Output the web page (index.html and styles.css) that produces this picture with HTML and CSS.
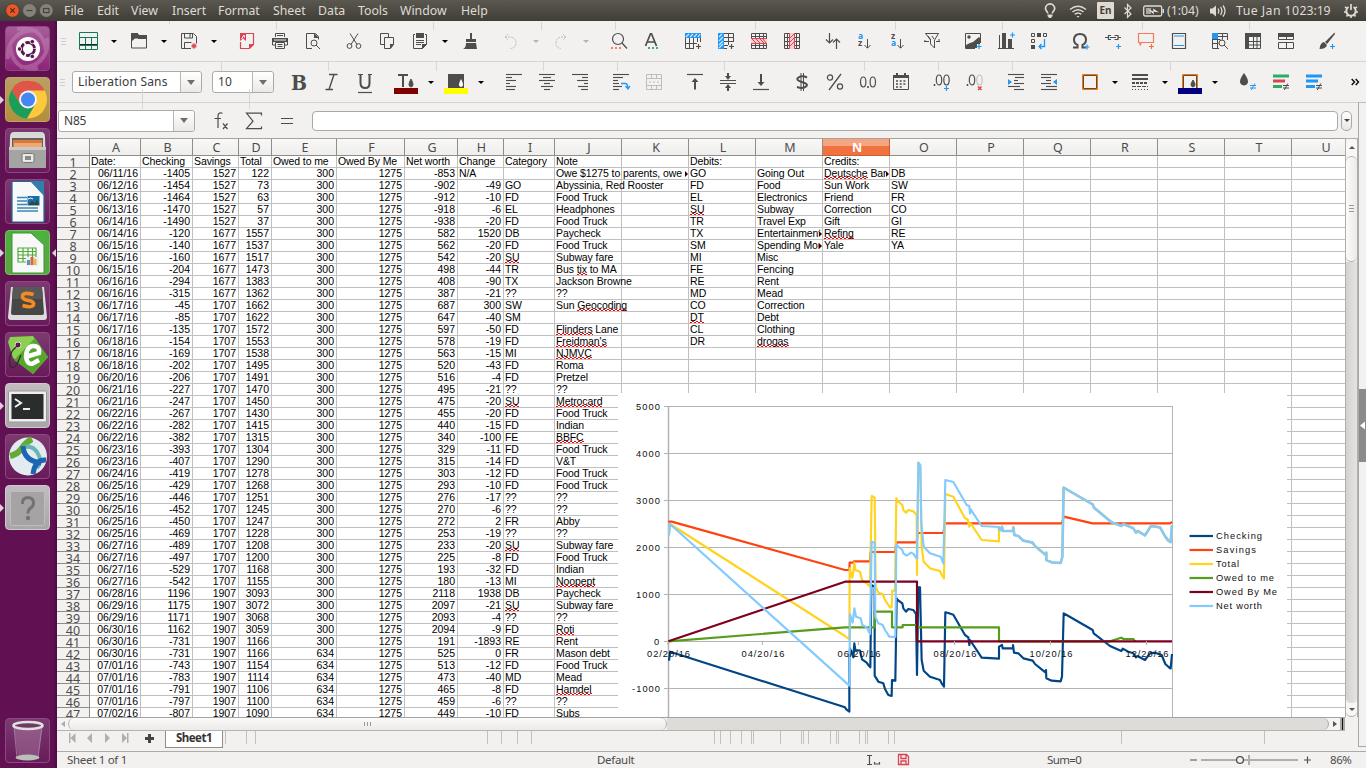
FILE: index.html
```html
<!DOCTYPE html>
<html lang="en">
<head>
<meta charset="utf-8">
<title>Spreadsheet</title>
<link rel="stylesheet" href="styles.css">
</head>
<body>
<header class="panel">
  <div class="winbtns">
    <svg width="58" height="21" viewBox="0 0 58 21"><circle cx="12.5" cy="10.5" r="6.7" fill="#e9582a" stroke="#3a352f" stroke-width=".6"/><path d="M10.3 8.3l4.4 4.4M14.7 8.3l-4.4 4.4" stroke="#5a2312" stroke-width="1.2"/><circle cx="29.5" cy="10.5" r="6.5" fill="#85827a"/><path d="M26.500 10.500h6" stroke="#45423c" stroke-width="1.2"/><circle cx="46.300" cy="10.500" r="6.500" fill="#85827a"/><rect x="43.500" y="8.500" width="5.500" height="4" fill="none" stroke="#45423c" stroke-width="1.100"/></svg>
  </div>
  <nav class="menu"><span>File</span><span>Edit</span><span>View</span><span>Insert</span><span>Format</span><span>Sheet</span><span>Data</span><span>Tools</span><span>Window</span><span>Help</span></nav>
  <div class="tray">
    <svg width="16" height="18" viewBox="0 0 16 18"><path d="M5.800 11.500c0-2-2.300-2.600-2.300-5a4.600 4.600 0 0 1 9.200 0c0 2.400-2.400 3-2.400 5" fill="none" stroke="#dfdbd2" stroke-width="1.700"/><path d="M5.500 12.500h5v1.500l-1.500 2h-2l-1.500-2z" fill="#dfdbd2"/></svg>
    <svg class="wifi" width="20" height="16" viewBox="0 0 20 16" fill="none" stroke="#dfdbd2" stroke-width="1.500"><path d="M2 6.500q8-6.500 16 0M4.500 9q5.500-4.600 11 0M6.800 11.400q3.200-2.800 6.400 0"/><path d="M8.500 13l1.500 1.700 1.500-1.700z" fill="#dfdbd2" stroke="none"/></svg>
    <b class="lang">En</b>
    <svg class="bt" width="10" height="16" viewBox="0 0 10 16" fill="none" stroke="#dfdbd2" stroke-width="1.200"><path d="M1.500 4.500l6.500 6.500-3.500 3.300V1.500L8 5 1.500 11"/></svg>
    <svg class="bat" width="22" height="12" viewBox="0 0 22 12"><rect x=".7" y="1" width="18" height="10" rx="1.500" fill="none" stroke="#dfdbd2" stroke-width="1.300"/><path d="M19.500 4h1.500v4h-1.500" fill="#dfdbd2"/><path d="M3 3h5v6H3z" fill="#aaa69e"/><path d="M5.500 4.500l5 2-.5-3 6 4-5.500-1 .5 3z" fill="#f3efe6"/></svg>
    <span class="left-time">(1:04)</span>
    <svg class="snd" width="18" height="14" viewBox="0 0 18 14"><path d="M1 4.500h2.500L7 1.500v11L3.500 9.500H1z" fill="#dfdbd2"/><path d="M9 4.500q1.700 2.500 0 5M11.500 3q2.800 4 0 8M14 1.500q4 5.500 0 11" fill="none" stroke="#dfdbd2" stroke-width="1.300"/></svg>
    <span class="clock"><span>Tue Jan 10</span><span class="hm">23:19</span></span>
    <svg class="gear" width="16" height="16" viewBox="0 0 16 16" fill="none" stroke="#dfdbd2"><path d="M5.500 4A4.700 4.700 0 1 0 10.500 4" stroke-width="2"/><path d="M8 1v6" stroke-width="1.700"/><path d="M2 4l1.700 1M12.300 5L14 4M1 9h2.500M12.500 9H15M3.500 13.500l1.300-1.700M11.200 11.800l1.300 1.700M8 12.500V15" stroke-width="1.700"/></svg>
  </div>
</header>

<div class="desk">
<aside class="launcher">
  <div class="tile purple"><svg viewBox="0 0 45 45"><path d="M3 33C1 15 15 2 32 5M42 12C45 30 32 43 15 41M12 3Q38-1 41 25M33 42Q8 46 5 20" fill="none" stroke="#c98dbd" stroke-opacity=".45" stroke-width="4"/><circle cx="23" cy="23" r="12" fill="#fff"/><circle cx="23" cy="23" r="6.500" fill="none" stroke="#5c1650" stroke-width="2.800" stroke-dasharray="12 1.600"/><g fill="#5c1650" stroke="#fff" stroke-width=".8"><circle cx="14.500" cy="23" r="2.200"/><circle cx="27.300" cy="15.600" r="2.200"/><circle cx="27.300" cy="30.400" r="2.200"/></g></svg></div>
  <div class="tile gold run"><svg viewBox="0 0 45 45"><circle cx="23" cy="22.500" r="19" fill="#fdc93c"/><path d="M23 13.500H39.700Q36 5 27 3.900 12 2 6.400 13.200L15 26.500z" fill="#df5548"/><path d="M6.500 13A19 19 0 0 0 22 41.500L30.500 27 15 26.500z" fill="#1c9e5a"/><circle cx="23" cy="22.500" r="9" fill="#f3f3f3"/><circle cx="23" cy="22.500" r="7" fill="#4486f2"/></svg></div>
  <div class="tile"><svg viewBox="0 0 45 45"><path d="M5 9q0-5 4-5h27q4 0 4 5l1 31H4z" fill="#d9d9d8"/><path d="M7 10h31v10H7z" fill="#63605e"/><path d="M8 12h29v8H8z" fill="#d9783e"/><path d="M9 15h28v4H9z" fill="#f0a873"/><path d="M4 19h37v21H4z" fill="#a4a4a3"/><path d="M4 19h37v3H4z" fill="#c9c9c8"/><rect x="17" y="25.500" width="12" height="9" rx="1.500" fill="#e9e9e8" stroke="#777"/><rect x="20" y="28" width="6" height="4" fill="#898988"/></svg></div>
  <div class="tile"><svg viewBox="0 0 45 45"><path d="M7 2.500h20L39 15v28H7z" fill="#f7f8f8" stroke="#226996" stroke-width="1.200"/><path d="M25 2h14v15z" fill="#2f7fae"/><path d="M12 18.500h10M12 22h10M12 25.500h10M12 29h21M12 32h21" stroke="#3a86b8" stroke-width="1.700"/><rect x="22.500" y="17" width="12" height="9.500" fill="#1b6cb0"/><path d="M23 26l4-4 3 2 2-4 2 6z" fill="#2c4f2a"/><path d="M23 20q3-2 5 0" fill="none" stroke="#fff"/></svg></div>
  <div class="tile green run active"><svg viewBox="0 0 45 45"><path d="M7 3h19L39 15v28H7z" fill="#f8f8f8" stroke="#3a972c"/><path d="M27 2h13v14z" fill="#4cb43d"/><path d="M13 18h18v14H13zM13 21.500h18M13 25h18M13 28.500h18M18 18v14M23 18v14M27.500 18v14" fill="none" stroke="#54ac3b" stroke-width="1.200"/><path d="M21 27h13v9H21z" fill="#eee"/><path d="M22 30h3v5h-3z" fill="#5992c2"/><path d="M25.500 27h3v8h-3z" fill="#dc6538"/><path d="M29 29h2.500v6H29z" fill="#e0bd44"/></svg></div>
  <div class="tile"><svg viewBox="0 0 45 45"><path d="M6 6h33l3 30q0 3-3 3H6q-3 0-3-3z" fill="#dcdcdc"/><path d="M8 6h29l2 26q0 2-2 2H8q-2 0-2-2z" fill="#464646"/><path d="M8 6h29l1 12H7z" fill="#575757"/><path d="M28.500 13.500q-11-3-11 2 0 3 6 4t5 4.500q-2 3-11 .5" fill="none" stroke="#f68a20" stroke-width="3.600"/></svg></div>
  <div class="tile"><svg viewBox="0 0 45 45"><path d="M5 5l23-1 15 21-15 17L8 26 3 10z" fill="#8bd04f"/><path d="M30 6l13 19-15 17L9 28z" fill="#55a82c"/><circle cx="13" cy="13" r="3" fill="#5b1f4c" stroke="#ddd"/><path d="M12 14Q2 22 5 34q3 4 7-2l4-9" fill="none" stroke="#35262f" stroke-width="1.300"/><path d="M22 24.500l12-3.500q1-8-7-7-6 2-6 11 1 8 7 6.500l6-3.500" fill="none" stroke="#fff" stroke-width="4.500"/></svg></div>
  <div class="tile grey run"><svg viewBox="0 0 45 45"><rect x="3.500" y="8" width="38" height="31" rx="1" fill="#eee" stroke="#999"/><rect x="6.500" y="11" width="32" height="25" fill="#2b2d2c"/><path d="M10 16l6 4-6 4M18 26h7" fill="none" stroke="#eee" stroke-width="2"/></svg></div>
  <div class="tile"><svg viewBox="0 0 45 45"><circle cx="23" cy="22.500" r="19" fill="#e3ebf0"/><path d="M5 22q8-2 12-8 4-6 10-9" fill="none" stroke="#64aa35" stroke-width="6"/><path d="M17 14q9-4 15 4 6 9 0 16" fill="none" stroke="#68b6b0" stroke-width="4"/><path d="M18 12q1 15 18 17M41 26q-11-1-13 14" fill="none" stroke="#1c65b2" stroke-width="5"/></svg></div>
  <div class="tile grey run"><svg viewBox="0 0 45 45"><rect x="5.500" y="6.500" width="34" height="34" rx="2" fill="#a5a3a4" stroke="#bfbdbe"/><path d="M17.500 19q-.5-6 5-6.500 6 0 6 5.500 0 3.500-3.500 5.500-2 1.500-2 5" fill="none" stroke="#747273" stroke-width="3"/><circle cx="23" cy="33" r="2.200" fill="#747273"/></svg></div>
  <div class="tile trash"><svg viewBox="0 0 45 45"><path d="M9 9h28l-4 31H13z" fill="#c9a7c2" fill-opacity=".32"/><path d="M9 9l3 31M37 9l-4 31" stroke="#ddd" stroke-opacity=".4"/><ellipse cx="23" cy="7.500" rx="14.500" ry="3.500" fill="#6d3b63" stroke="#dfe1df" stroke-width="2.600"/><ellipse cx="22.500" cy="39.500" rx="12" ry="3" fill="#b9bfb9"/></svg></div>
</aside>

<main class="app">
  <div class="toolbar" id="standard"></div>
  <div class="toolbar" id="formatting"></div>
  <div class="formula">
    <div class="combo name"><span>N85</span><i></i></div>
    <svg class="fx" width="90" height="30" viewBox="0 0 90 30" fill="none" stroke="#4d4d4d" stroke-width="1.200"><path d="M16.500 7.200q-4.500-1.500-4.500 3V22M8.500 12.500h6.500M17 17.500l4.500 5.500M21.500 17.500l-4.500 5.500M55.500 9.500v-2.300H40.500l6.500 8-6.500 7.500H55.500v-2.300M75 12.500h12M75 17.500h12"/></svg>
    <div class="entry"></div><div class="drop"></div>
  </div>
  <div class="work">
    <div class="sheetcol">
      <div class="view">
        <div class="sheet" id="sheet"></div>
        <div class="chart" id="chart"></div>
      </div>
      <div class="hscroll"><i class="ha"><svg width="4" height="6"><path d="M4 0v6L0 3z" fill="#aaa"/></svg></i><i class="thumb"><svg width="8" height="4"><path d="M.5 0v4M3.500 0v4M6.500 0v4" stroke="#999"/></svg></i><i class="trough"></i><i class="ha r"><svg width="4" height="6"><path d="M0 0v6l4-3z" fill="#555"/></svg></i><i class="split"></i></div>
    </div>
    <div class="vscroll"><i class="va"></i><i class="thumb"><svg width="5" height="8"><path d="M0 .5h5M0 3.500h5M0 6.500h5" stroke="#999"/></svg></i><i class="trough"></i><i class="va"></i></div>
    <div class="side"><svg width="9" height="644" viewBox="0 0 9 644"><path d="M1 251h8v73H1z" fill="#8c8b89"/><path d="M7 283.500v8l-5-4z" fill="#fff"/></svg></div>
  </div>
  <div class="tabs">
    <svg width="108" height="20" viewBox="0 0 108 20" fill="#b1afac"><path d="M12 2h1.500v10H12zM18.500 2v10l-5-5zM35 2v10l-5-5zM48 2v10l5-5zM65 2v10l5-5zM70 2h1.500v10H70z"/><path d="M91 3h3v3h3v3h-3v3h-3v-3h-3V6h3z" fill="#454545"/></svg>
    <b class="tab">Sheet1</b>
    <svg class="marks" width="1122" height="15" viewBox="223 732 1122 15"><path d="M225.500 732v13M246.500 732v13M255.500 732v13M487.500 732v13M501.500 732v13M517.500 732v13M531.500 732v13M714.500 732v13M720.500 732v13M730.500 732v13M741.500 732v13M751.500 732v13M753.500 732v13M780.500 732v13M801.500 732v13M803.500 732v13M808.500 732v13M830.500 732v13M836.500 732v13M838.500 732v13M859.500 732v13M865.500 732v13M867.500 732v13M888.500 732v13M894.500 732v13M1121.500 732v13M1264.500 732v13" stroke="#c3c1be"/></svg>
  </div>
  <footer class="status">
    <span class="s1">Sheet 1 of 1</span><span class="s2">Default</span>
    <svg class="s3" width="44" height="14" viewBox="0 0 44 14" fill="none"><path d="M1 2.500h5M3.500 2.500v9M1 11.500h5M8.500 9v2h5V9" stroke="#4d4d4d" stroke-width="1.200"/><path d="M32.500 1.500h8l2 2v8H32.500zM35 2v3.500h5V2M35 11V8h5v3" stroke="#da4453" stroke-width="1.300"/></svg>
    <span class="s4">Sum=0</span>
    <svg class="s5" width="124" height="14" viewBox="0 0 124 14"><path d="M1 7h7M115 7h7M118.500 3.500v7" stroke="#4d4d4d" stroke-width="1.200"/><path d="M12 7h97" stroke="#b0aeab" stroke-width="2"/><path d="M60 2v10" stroke="#b0aeab" stroke-width="2"/><circle cx="51" cy="7" r="3.400" fill="#f2f1f0" stroke="#4d4d4d" stroke-width="1.300"/></svg>
    <span class="s6">86%</span>
  </footer>
  <svg class="ticks" width="1309" height="90" viewBox="57 21 1309 90"><path d="M169.500 21v3M276.500 22v8M433.500 22v8M541.500 22v8M615.500 22v8M755.500 22v8M895.500 22v8M1002.500 22v8M1142.500 22v8M1249.500 22v8M221.500 62v9M328.500 62v9M436.500 62v9M543.500 62v9M617.500 62v9M724.500 62v9M864.500 62v9M938.500 62v9M1012.500 62v9M1170.500 62v9M142.500 89v20M249.500 89v20" stroke="#d8d6d4"/></svg>
</main>
</div>
<script src="script.js"></script>
</body>
</html>
```
FILE: styles.css
```css
*{box-sizing:border-box}
body{margin:0;width:1366px;height:768px;overflow:hidden;background:#f2f1f0;font-family:"Noto Sans","Open Sans",sans-serif;color:#4c4c4c;display:flex;flex-direction:column}
i{font-style:normal}
svg{display:block;flex:none}
.panel{height:21px;background:linear-gradient(#5b5850,#403d38);display:flex;align-items:center;color:#dfdbd2;font-size:12.3px;line-height:20px;white-space:nowrap}
.menu{display:flex;padding-left:6px;width:975px}
.menu span{width:33px}
.menu span:nth-child(2){width:34px}
.menu span:nth-child(3){width:41px}
.menu span:nth-child(4){width:46px}
.menu span:nth-child(5){width:55px}
.menu span:nth-child(6){width:45px}
.menu span:nth-child(7){width:40px}
.menu span:nth-child(8){width:42px}
.menu span:nth-child(9){width:61px}
.tray{display:flex;align-items:center;padding-left:9px}
.wifi{margin-left:10px}
.lang{background:#dfdbd2;color:#45413b;width:17px;height:17px;border-radius:1px;margin-left:9px;font-size:10px;line-height:17px;text-align:center}
.bt{margin-left:9px}
.bat{margin-left:10px}
.left-time{width:44px;padding-left:2px}
.snd{margin-left:0}
.clock{display:flex;width:99px;margin-left:9px;letter-spacing:.45px}
.hm{letter-spacing:-.1px}
.gear{margin-left:8px}
.desk{display:flex;height:747px}
.launcher{width:57px;background:linear-gradient(90deg,#611152 0 53px,#4d0a41);padding:5px 0 5px 5px;display:flex;flex-direction:column;gap:6px;flex:none}
.tile{width:45px;height:45px;border-radius:4px;border:1px solid #8b4a7f;background:linear-gradient(#7c3a70,#681b5a);position:relative}
.tile svg{width:45px;height:45px;margin:-1px}
.purple{background:linear-gradient(#a85d9a,#8d2377)}
.gold{background:linear-gradient(#b8a066,#b38f3a);border-color:#c0a566}
.green{background:linear-gradient(#4fae42,#58a83e);border-color:#75c264}
.grey{background:linear-gradient(#c2bcc0,#aaa5a8);border-color:#cfcacd}
.trash{margin-top:auto}
.run::before{content:"";position:absolute;left:-6px;top:18px;border:4px solid transparent;border-left-color:#dcd3da;border-right:0}
.active::after{content:"";position:absolute;left:46px;top:18px;border:4px solid transparent;border-right-color:#dcd3da;border-left:0}
.app{flex:1;display:flex;flex-direction:column;position:relative;min-width:0}
.toolbar{height:41px;border-bottom:1px solid #d6d4d2;display:flex;align-items:center;padding-left:14px;background:#f2f1f0}
#standard{padding-left:15px}
.toolbar svg{overflow:visible}
.btn{width:33px;height:24px;display:flex;align-items:center;justify-content:center;flex:none}
.arr{width:17px;height:24px;flex:none;display:flex;align-items:center;justify-content:center}
.arr::before{content:"";border:3px solid transparent;border-top:3px solid #000;border-bottom:0}
.arr.off::before{border-top-color:#b5b3b1}
.gap{width:8px;flex:none}
.grip{width:5px;height:9px;margin:2px 0 0 -11px;background:repeating-linear-gradient(#d0cecb 0 1px,transparent 1px 3px);flex:none}
.lead{width:6px;flex:none}
.combo{height:22px;border:1px solid #adaba8;border-radius:3px;background:#fff;display:flex;font-size:12px;line-height:19px;color:#3c3c3c;flex:none;letter-spacing:.2px}
.combo span{flex:1;padding-left:5px;white-space:nowrap}
.combo i{width:21px;border-left:1px solid #b8b6b3;background:linear-gradient(#fff,#ebe9e7);border-radius:0 3px 3px 0;display:flex;align-items:center;justify-content:center}
.combo i::before{content:"";border:4px solid transparent;border-top:5px solid #706e6b;border-bottom:0}
.family{width:130px;margin-left:7px}
.size{width:62px;margin:0 8px 0 10px}
.more{margin-left:21px;line-height:20px}
.formula{height:35px;display:flex;align-items:center;background:#f2f1f0}
.name{width:137px;margin-left:1px;letter-spacing:-.2px}
.fx{margin:0 16px 0 11px}
.entry{width:1026px;height:20px;border:1px solid #aaa8a5;border-radius:4px;background:#fff}
.drop{width:11px;height:20px;border:1px solid #aaa8a5;border-radius:5px;margin-left:3px;background:linear-gradient(#fff,#e8e6e4);display:flex;align-items:center;justify-content:center}
.drop::before{content:"";border:3px solid transparent;border-top:3px solid #444;border-bottom:0}
.work{display:flex;height:593px;flex:none}
.sheetcol{width:1288px;display:flex;flex-direction:column}
.view{height:579px;overflow:hidden;position:relative;background:#fff;border-top:1px solid #a5a3a0}
.sheet{display:grid;grid-template-columns:33px 51px 52px 46px 33px 65px 68px 53px 46px 51px repeat(11,67px) 67px;grid-auto-rows:12px;width:1355px}
.ch{height:17px;border-right:1px solid #8f8d8a;border-bottom:1px solid #8f8d8a;background:linear-gradient(#f8f8f7,#efeeed);font-size:12.500px;line-height:17px;text-align:center;color:#4c4c4c;padding-left:2px}
.ch.sel{background:linear-gradient(#f6a583 0 45%,#f0733f 46%);color:#fff;font-weight:bold;border-color:#c8602f}
.rh{border-right:1px solid #8f8d8a;border-bottom:1px solid #8f8d8a;background:#f3f2f1;font-size:12.500px;line-height:14px;text-align:center;overflow:hidden;color:#4c4c4c}
.c{border-right:1px solid #c0c0c0;border-bottom:1px solid #c0c0c0;font:10.500px/10px "Liberation Sans",Arial,sans-serif;color:#000;white-space:nowrap;padding-left:1px;letter-spacing:-.1px;min-width:0}
.n{text-align:right;padding-right:2px;letter-spacing:0}
.c u{text-decoration:none;background:repeating-linear-gradient(90deg,#f00 0 2px,transparent 2px 4px) 0 100%/100% 1px no-repeat,repeating-linear-gradient(90deg,transparent 0 2px,#f00 2px 4px) 0 calc(100% - 1px)/100% 1px no-repeat}
.cut{display:block;overflow:hidden;position:relative;height:12px;width:65px}
.cut.wide{width:132px}
.cut::after{content:"";position:absolute;right:0;top:3px;border:3px solid transparent;border-left:3px solid #300;border-right:0;background:#fff}
.chart{position:absolute;left:561px;top:254px;width:669px;height:325px;background:#fff}
.chart text{font-family:"Liberation Sans",Arial,sans-serif;font-size:9.300px;fill:#111}
.hscroll{height:14px;border-top:1px solid #a5a3a0;border-bottom:1px solid #b5b3b0;background:#f4f3f2;display:flex}
.hscroll i{display:flex;align-items:center;justify-content:center}
.ha{width:11px}
.hscroll .thumb{width:599px;border:1px solid #b5b3b0;border-width:0 1px;border-radius:7px;background:linear-gradient(#fbfbfa,#eceae8)}
.hscroll .trough{flex:1;background:#dddcd9;border-radius:0 7px 7px 0;border-right:1px solid #aaa}
.split{width:5px;background:linear-gradient(90deg,#aaa 2px,#111 2px 3px,#aaa 3px)}
.vscroll{width:13px;height:579px;border:1px solid #b0aeab;border-width:1px 1px 0;background:#f2f1f0;display:flex;flex-direction:column}
.va{height:14px;border:1px solid #b0aeab;border-width:0 0 1px;border-radius:0 0 6px 6px;display:flex;align-items:center;justify-content:center;background:#f8f7f6}
.va::before{content:"";border:3px solid transparent;border-top:3px solid #555;border-bottom:0}
.va:first-child{border-radius:6px 6px 0 0;height:17px;border-bottom:0}
.va:first-child::before{transform:rotate(180deg)}
.vscroll .thumb{height:106px;border:1px solid #b5b3b0;border-width:1px 0;border-radius:6px;background:linear-gradient(90deg,#fbfbfa,#eceae8);display:flex;align-items:center;justify-content:center}
.vscroll .trough{flex:1;background:linear-gradient(90deg,#d4d2d0,#e5e4e2);border-radius:0 0 6px 6px}
.side{width:8px;margin-top:-36px;height:645px;border-left:1px solid #aaa8a5;border-top:1px solid #c0bebb;border-bottom:1px solid #aaa8a5;background:#f2f1f0;overflow:hidden}
.side svg{margin:35px 0 0 -1px;margin-top:0}
.side svg{transform:translateY(35px)}
.tabs{height:21px;display:flex;border-bottom:1px solid #adaba8;flex:none}
.tab{width:58px;height:17px;background:#fff;border:1px solid #8f8d8a;border-top:0;text-align:center;font-size:11.500px;line-height:14px;color:#333;letter-spacing:-.5px}
.status{height:15px;display:flex;align-items:center;font-size:11.500px;line-height:14px;white-space:nowrap;background:#f2f1f0}
.s1{width:540px;padding-left:10px;letter-spacing:-.3px}
.s2{width:269px;letter-spacing:-.3px}
.s4{width:142px;margin-left:137px;letter-spacing:-.6px}
.s6{margin-left:17px;letter-spacing:-.4px}
.ticks{position:absolute;left:0;top:0;pointer-events:none}
```
FILE: script.js
```js
const G = '#4d4d4d', B = '#2196f3', R = '#da4453', O = '#f67400';
const svg = (body, extra = '') =>
  `<svg width="16" height="16" viewBox="0 0 16 16" fill="none" stroke="${G}" ${extra}>${body}</svg>`;
const plus = (x, y, c = B) => `<path d="M${x - 2.5} ${y}h5M${x} ${y - 2.5}v5" stroke="${c}" stroke-width="1.2"/>`;
const neq = c => `<path d="M10 11.500h6M10 14h6M14.800 9.500l-3.500 6.500" stroke="${c}"/>`;
const lines = list => list.map(([x, y, w]) => `<path d="M${x} ${y + .5}h${w}" stroke-width="1.100"/>`).join('');
const zero = (x, c = G) => `<ellipse cx="${x}" cy="8" rx="2.700" ry="5" stroke="${c}" stroke-width="1.200"/>`;
const letters = (a, ca, b, cb) =>
  `<text x="0" y="6" font-size="8.500" font-weight="700" fill="${ca}" stroke="none">${a}</text><text x="0" y="12.500" font-size="8.500" font-weight="700" fill="${cb}" stroke="none">${b}</text><path d="M9.500 6v9M6.500 12l3 3.200 3-3.200"/>`;

const icons = {
  table: svg('<path d="M-1.500-.5h18v17h-18zM-1.500 4.500h18M4.500 4.500v12M10.500 4.500v12M-1.500 12.500h18" stroke="#117a5b"/><path d="M-1 11.500h17" stroke="#222"/>'),
  open: svg(`<path d="M.5 15V.5h6l1.500 2h7.500V15z"/><path d="M0 0h7v5.500H4L1 8H0z" fill="${G}" stroke="none"/><path d="M7 2h9v4H7z" fill="${G}" stroke="none"/>`),
  save: svg(`<path d="M10 15.500H.5V.5h12l3 3v7M3.500.5v4.500h8V.5M9 .5v4M3.500 15V9.500h7"/><circle cx="13" cy="13" r="2.400" fill="${R}" stroke="#f2a0a8"/>`),
  pdf: svg(`<path d="M6 .5h8.500v11l-4 4H1.500V9" stroke="${R}" stroke-width="1.200"/><path d="M1 0h6v8L4 5.500 1 8zM10 11h5l-5 5z" fill="${R}" stroke="none"/><path d="M2.500 6L5 2l.5 2.500" stroke="#fff"/>`),
  print: svg(`<path d="M3.500 4V.5h9V4M5 2.500h6M3.500 12H.5V6.500h15V12h-3M3.500 9.500h9v6h-9zM5.500 11.500h5M5.500 13.500h5"/><path d="M0 5h16v4H0z" fill="${G}" stroke="none"/><path d="M2 7h12" stroke="#f2f1f0"/>`),
  preview: svg(`<path d="M7 15.500H1.500V.5h9l3 3v3"/><path d="M9 0l5 5H9z" fill="${G}" stroke="none"/><circle cx="9" cy="10" r="3"/><path d="M11 12l4 4"/>`),
  cut: svg('<path d="M4 .5l7 11M12 .5L5 11.500"/><circle cx="3.500" cy="13" r="2.400"/><circle cx="12.500" cy="13" r="2.400"/>'),
  copy: svg(`<path d="M5 11.500H1.500V.500h8V4"/><path d="M5.500 4.500h9v7l-3 4h-6z"/><path d="M11 11h4l-4 5z" fill="${G}" stroke="none"/>`),
  paste: svg(`<path d="M3 1.500H1.500v14h9l4-4v-10H13M4 7.500h8M4 9.500h8M4 11.500h5"/><path d="M4 0h8v5H4zM10 11h5l-5 5z" fill="${G}" stroke="none"/>`),
  brush: svg(`<path d="M8 0h2v7H8zM4 6h10v3H4zM4 10h10l1 6H1q3-1 3-6z" fill="${G}" stroke="none"/>`),
  undo: svg('<path d="M5 1L2 4l3 3M2 4h6q5 1 5 6t-6 5.500" stroke="#bdbbb9" stroke-dasharray="2 1"/>'),
  redo: svg('<path d="M10 1l3 3-3 3M13 4H8q-5 1-5 6t5 5.500" stroke="#bdbbb9" stroke-dasharray="2 1"/>'),
  find: svg('<circle cx="7" cy="6" r="5.500" stroke-width="1.200"/><path d="M11 10l5 5.500" stroke-width="1.300"/><path d="M0 15h10" stroke="#f0826a" stroke-width="2" stroke-dasharray="2 2"/>'),
  spell: svg('<path d="M1.500 13L6.500.8h1l5 12.200M3.500 9h7" stroke-width="1.700"/><path d="M4 15h11" stroke="#3fae70" stroke-width="2" stroke-dasharray="2 2"/>'),
  rowadd: svg(`<path d="M.5 5v10.500H9M.5 10.500H12M4.500 5v10.500M8.500 5v10.500M12.500 5v4M15.500 5v4"/><path d="M0 0h16v5H0z" fill="${B}" stroke="none"/><path d="M1 4l3-3M5 4l3-3M9 4l3-3M13 4l2-3" stroke="#cfe8fb" stroke-width="1.200"/>${plus(13.500, 13.500, G)}`),
  coladd: svg(`<path d="M5 .5h10.500V9M10.500.5V12M5 4.500h10.500M5 8.500h10.500M5 12.500h5M5 15.500h4"/><path d="M0 0h6v16H0z" fill="${B}" stroke="none"/><path d="M1 4l3-3M1 8l4-4M1 12l4-4M1 15l4-4" stroke="#cfe8fb" stroke-width="1.200"/>${plus(13.500, 13.500, G)}`),
  rowdel: svg(`<path d="M.5.5h15v15H.5zM.5 3.500h15M.5 12.500h15M4.500.5v15M8.500.5v15M12.500.5v15"/><path d="M0 5h16v6H0z" fill="#f6cfd1" stroke="none"/><path d="M0 5.500h16M0 10.500h16M1 6l4 4M5 6l4 4M9 6l4 4M12 6l3 4" stroke="${R}"/>`),
  coldel: svg(`<path d="M.5.5h15v15H.5zM3.500.5v15M12.500.5v15M.5 4.500h15M.5 8.500h15M.5 12.500h15"/><path d="M5 0h6v16H5z" fill="#f6cfd1" stroke="none"/><path d="M5.500 0v16M10.500 0v16M6 5l4-4M6 9l4-4M6 13l4-4" stroke="${R}"/>`),
  sort: svg('<path d="M4.500 0v10M1 6.500L4.500 10 8 6.500M11.500 16V6M8 9.500L11.500 6 15 9.500" stroke-width="1.200"/>'),
  az: svg(letters('a', B, 'z', G)), za: svg(letters('z', G, 'a', B)),
  filter: svg('<path d="M1.500.5h13L10.500 7v8L6.500 11V7zM4 3L7 7M8 3l2 3"/><path d="M0 8.500h5M12 8.500h4M1 7v2M15 6v2"/>'),
  image: svg(`<path d="M10 15.500H.5V.5h15V10"/><circle cx="4" cy="4" r="1.700" fill="${G}" stroke="none"/><path d="M1 14V12l4-2 3-1 6-5 1 1v6H12v4H1z" fill="${G}" stroke="none"/>${plus(14, 13.500)}`),
  chart: svg(`<path d="M1.500 2v13M0 15.500h16"/><path d="M4 0h4v15H4zM10 6h4v9h-4z" fill="${G}" stroke="none"/>${plus(14.500, 2)}`),
  pivot: svg(`<path d="M.5.5h3v3h-3zM12.500.5h3v3h-3zM.5 6.500h3v3h-3z"/><path d="M6 0h4v4H6zM0 12h4v4H0z" fill="${G}" stroke="none"/><path d="M13.500 6v7.500H8M10.500 11L8 13.500l2.500 2.500" stroke="${B}" stroke-width="1.300"/>`),
  omega: svg(`<path d="M1 14.500h4.500V12q-3.500-1.500-3.500-5.500Q2.500 1 8 1t6 5.500q0 4-3.500 5.500v2.500H14" stroke-width="2"/>${plus(15, 14)}`),
  link: svg(`<path d="M0 4.500h3M6 2.500H3.500v4H6M5 4.500h6M9.500 2.500H13v4H9.500M13 4.500h3" stroke-width="1.200"/>${plus(13.500, 13.500)}`),
  comment: svg(`<path d="M.5.5h15v9H3.500L2 12.500v-3H.5z" stroke="#f67a5a" stroke-width="1.200"/>${plus(13.500, 13.500, '#f26d4c')}`),
  header: svg(`<path d="M1.500.5h13v15h-13z" stroke-width="1.200"/><path d="M3 3h10M3 12.500h10" stroke="${B}"/>`),
  define: svg(`<path d="M.5.5h15V7M.5.5v15H7M5.500.5v15M10.500.5v6M.5 6.500h8M.5 10.500h6M1 3.500h14"/><path d="M0 0h6v6H0z" fill="${B}" stroke="none"/><circle cx="10" cy="10" r="3" fill="#f2f1f0"/><path d="M12 12l4 4"/>`),
  freeze: svg(`<path d="M.5.5h15v15H.5zM8.500 4v12M12 4v12M4 8.500h12M4 12h12"/><path d="M0 0h16v4H4v12H0z" fill="${G}" stroke="none"/>`),
  split: svg(`<path d="M.5.5h15v6H.5zM.5 9.500h15v6H.5zM8.500 4v3M8.500 9v6"/><path d="M0 0h16v4H0z" fill="${G}" stroke="none"/>`),
  paint: svg(`<path d="M15.500-.5L6 9l2 2 8-10zM5 9q-4 1-4.500 7Q7 16 8 12z" fill="${G}" stroke="none"/>${plus(13.500, 13.500)}`),
  bold: svg(`<text x="0" y="15.500" font-family="DejaVu Serif" font-size="20" font-weight="700" fill="${G}" stroke="none" textLength="16" lengthAdjust="spacingAndGlyphs">B</text>`),
  italic: svg('<path d="M5 .5h8.500M1.500 15.500H9M10 .5L5 15.500" stroke-width="1.400"/>'),
  underline: svg('<path d="M1 .5h5M11 .5h4" stroke-width="1.200"/><path d="M3.500 0v9q0 5 5 5 4 0 4-5V0" stroke-width="2"/><path d="M1 18.500h14" stroke-width="1.200"/>'),
  tcolor: svg(`<path d="M0 1h10M5 1v12" stroke-width="2"/><path d="M13 5q4 7 0 8-4-1 0-8z" fill="${G}"/><path d="M-4 14h24v6H-4z" fill="#800000" stroke="none"/>`),
  bcolor: svg(`<path d="M0 0h16v14H0z" fill="${G}" stroke="none"/><path d="M13 5q4 7 0 8-4-1 0-8z" fill="#fff" stroke="none"/><path d="M-4 14h24v6H-4z" fill="#ff0" stroke="none"/>`),
  left: svg(lines([[0, 0, 16], [0, 3, 6], [0, 6, 10], [0, 9, 4], [0, 12, 10], [0, 15, 9]])),
  center: svg(lines([[0, 0, 16], [4, 3, 8], [0, 6, 16], [5, 9, 6], [2, 12, 12], [5, 15, 6]])),
  right: svg(lines([[0, 0, 16], [10, 3, 6], [5, 6, 11], [12, 9, 4], [6, 12, 10], [9, 15, 7]])),
  wrap: svg(lines([[0, 0, 16], [0, 3, 10], [0, 6, 5], [0, 9, 6], [0, 12, 9], [0, 15, 6]]) + `<path d="M8 9.500h4q3 0 3 5M12.500 12l2.500 3 2-3" stroke="${B}" stroke-width="1.300"/>`),
  merge: svg('<path d="M.5.5h15v15H.5zM.5 4.500h15M.5 11.500h15M5.500.5v4M10.500.5v4M5.500 11.500v4M10.500 11.500v4M3 8h2M7 8h2M11 8h2" stroke="#bfbdbb"/>'),
  top: svg('<path d="M0 .5h16" stroke-width="1.200"/><path d="M8 15.500V6" stroke-width="2"/><path d="M4.500 8L8 4l3.500 4z" fill="#4d4d4d" stroke="none"/>'),
  middle: svg('<path d="M0 6.500h16M0 9.500h16"/><path d="M8-1v4M8 17v-4" stroke-width="2"/><path d="M5 2h6L8 6zM5 14h6L8 10z" fill="#4d4d4d" stroke="none"/>'),
  bottom: svg('<path d="M0 15.500h16" stroke-width="1.200"/><path d="M8 0v9" stroke-width="2"/><path d="M4.500 8h7L8 12z" fill="#4d4d4d" stroke="none"/>'),
  money: svg(`<path d="M13 3.500Q8 1 4.500 3.500T8 8t4 4.500-9 .5" stroke-width="2"/><path d="M7-1v18M9.500-1v18"/>`),
  percent: svg('<circle cx="3" cy="3.500" r="2.600" stroke-width="1.200"/><circle cx="13" cy="12.500" r="2.600" stroke-width="1.200"/><path d="M14 0L2 16" stroke-width="1.300"/>'),
  number: svg(zero(3.200) + zero(12.800) + '<path d="M8 12v2" stroke-width="1.600"/>'),
  date: svg(`<path d="M.5 2v13.500h15V2"/><path d="M0 1h3V-1h2v2h6V-1h2v2h3v3H0z" fill="${G}" stroke="none"/><path d="M3 7h11M3 10h11M3 13h7" stroke-width="1.600" stroke-dasharray="2 1.700"/>`),
  adddec: svg(`<g transform="translate(0 -2)">${zero(5) + zero(12.500)}<path d="M.5 12v2" stroke-width="1.500"/></g>${plus(12.500, 14.500)}`),
  deldec: svg(`<g transform="translate(0 -2)">${zero(5) + zero(12.500, '#c4c2c0')}<path d="M.5 12v2" stroke-width="1.500"/></g><path d="M11 12.500l3.500 3.500M14.500 12.500L11 16" stroke="${R}" stroke-width="1.500"/>`),
  indent: svg(lines([[0, 0, 16], [7, 3, 9], [6, 6, 4], [6, 9, 10], [0, 12, 12], [6, 15, 10]]) + `<path d="M0 5v6l4-3z" fill="${B}" stroke="none"/>`),
  outdent: svg(lines([[0, 0, 16], [0, 3, 10], [5, 6, 5], [0, 9, 10], [5, 12, 11], [0, 15, 16]]) + `<path d="M16 5v6l-4-3z" fill="${B}" stroke="none"/>`),
  border: svg(`<path d="M.5.5h15v15H.5z" stroke="${O}"/><path d="M1.500 1.500h13v13h-13z"/>`),
  style: svg('<path d="M0 1h16" stroke-width="2"/><path d="M0 5h16" stroke-width="2"/><path d="M0 9h16" stroke-width="2" stroke-dasharray="3 1"/><path d="M0 12.500h16" stroke-dasharray="4 1"/><path d="M0 15.500h16" stroke-dasharray="1 2"/>'),
  bordercolor: svg(`<path d="M.5.5h15v15H.5z" stroke="${O}"/><path d="M1.500 14V1.500h13V14"/><path d="M11 6q4 6 0 7-4-1 0-7z" fill="${G}"/><path d="M-4 14h24v6H-4z" fill="#000080" stroke="none"/>`),
  cond: svg(`<path d="M4-1q8 11 0 12.500Q-4 10 4-1z" fill="${G}" stroke="none"/>${neq(B)}`),
  bars1: svg(`<path d="M0 2h16M0 12.500h9" stroke="#27ae60" stroke-width="3"/><path d="M0 7h12" stroke="${R}" stroke-width="3"/>${neq(G)}`),
  bars2: svg(`<path d="M0 2h16M0 7h12M0 12.500h9" stroke="${B}" stroke-width="3"/>${neq(G)}`)
};

// "v" is a dropdown arrow, "x" a disabled one, "|" a group gap
function fill(id, spec, lead, tail) {
  document.getElementById(id).innerHTML = lead + spec.split(' ').map(k =>
    k === '|' ? '<span class="gap"></span>' :
    k === 'v' ? '<span class="arr"></span>' :
    k === 'x' ? '<span class="arr off"></span>' : `<span class="btn">${icons[k]}</span>`).join('') + tail;
}
fill('standard', 'table v open v save v | pdf print preview | cut copy paste v brush | undo x redo x | find spell | rowadd coladd rowdel coldel | sort az za filter | image chart pivot | omega link comment header | define freeze split | paint',
  '<span class="grip"></span><span class="lead"></span>', '');
fill('formatting', 'bold italic underline | tcolor v bcolor v | left center right | wrap merge | top middle bottom | money percent number date | adddec deldec | indent outdent | border v style v bordercolor v | cond bars1 bars2',
  '<span class="grip"></span><div class="combo family"><span>Liberation Sans</span><i></i></div><div class="combo size"><span>10</span><i></i></div>',
  '<svg class="more" width="8" height="8" viewBox="0 0 8 8"><path d="M.7 1L3.500 4 .7 7M4.700 1l2.800 3-2.800 3" fill="none" stroke="#111" stroke-width="1.500"/></svg>');

const rows = `Date:|Checking|Savings|Total|Owed to me|Owed By Me|Net worth|Change|Category|Note
06/11/16|-1405|1527|122|300|1275|-853|N/A||>Owe $1275 to parents, owe
06/12/16|-1454|1527|73|300|1275|-902|-49|GO|Abyssinia, Red Rooster
06/13/16|-1464|1527|63|300|1275|-912|-10|FD|Food Truck
06/13/16|-1470|1527|57|300|1275|-918|-6|EL|Headphones
06/14/16|-1490|1527|37|300|1275|-938|-20|FD|Food Truck
06/14/16|-120|1677|1557|300|1275|582|1520|DB|Paycheck
06/15/16|-140|1677|1537|300|1275|562|-20|FD|Food Truck
06/15/16|-160|1677|1517|300|1275|542|-20|_SU_|Subway fare
06/15/16|-204|1677|1473|300|1275|498|-44|TR|Bus _tix_ to MA
06/16/16|-294|1677|1383|300|1275|408|-90|TX|Jackson Browne
06/16/16|-315|1677|1362|300|1275|387|-21|??|??
06/17/16|-45|1707|1662|300|1275|687|300|SW|Sun _Geocoding_
06/17/16|-85|1707|1622|300|1275|647|-40|SM|
06/17/16|-135|1707|1572|300|1275|597|-50|FD|_Flinders_ Lane
06/18/16|-154|1707|1553|300|1275|578|-19|FD|_Freidman's_
06/18/16|-169|1707|1538|300|1275|563|-15|MI|_NJMVC_
06/18/16|-202|1707|1495|300|1275|520|-43|FD|Roma
06/20/16|-206|1707|1491|300|1275|516|-4|FD|Pretzel
06/21/16|-227|1707|1470|300|1275|495|-21|??|??
06/21/16|-247|1707|1450|300|1275|475|-20|_SU_|_Metrocard_
06/22/16|-267|1707|1430|300|1275|455|-20|FD|Food Truck
06/22/16|-282|1707|1415|300|1275|440|-15|FD|Indian
06/22/16|-382|1707|1315|300|1275|340|-100|FE|_BBFC_
06/23/16|-393|1707|1304|300|1275|329|-11|FD|Food Truck
06/23/16|-407|1707|1290|300|1275|315|-14|FD|V&amp;T
06/24/16|-419|1707|1278|300|1275|303|-12|FD|Food Truck
06/25/16|-429|1707|1268|300|1275|293|-10|FD|Food Truck
06/25/16|-446|1707|1251|300|1275|276|-17|??|??
06/25/16|-452|1707|1245|300|1275|270|-6|??|??
06/25/16|-450|1707|1247|300|1275|272|2|FR|Abby
06/25/16|-469|1707|1228|300|1275|253|-19|??|??
06/27/16|-489|1707|1208|300|1275|233|-20|_SU_|Subway fare
06/27/16|-497|1707|1200|300|1275|225|-8|FD|Food Truck
06/27/16|-529|1707|1168|300|1275|193|-32|FD|Indian
06/27/16|-542|1707|1155|300|1275|180|-13|MI|_Noopept_
06/28/16|1196|1907|3093|300|1275|2118|1938|DB|Paycheck
06/29/16|1175|1907|3072|300|1275|2097|-21|_SU_|Subway fare
06/29/16|1171|1907|3068|300|1275|2093|-4|??|??
06/30/16|1162|1907|3059|300|1275|2094|-9|FD|_Roti_
06/30/16|-731|1907|1166|300|1275|191|-1893|RE|Rent
06/30/16|-731|1907|1166|634|1275|525|0|FR|Mason debt
07/01/16|-743|1907|1154|634|1275|513|-12|FD|Food Truck
07/01/16|-783|1907|1114|634|1275|473|-40|MD|Mead
07/01/16|-791|1907|1106|634|1275|465|-8|FD|_Hamdel_
07/01/16|-797|1907|1100|634|1275|459|-6|??|??
07/02/16|-807|1907|1090|634|1275|449|-10|FD|Subs`.split('\n').map(r => r.split('|'));
const legend = `Debits:||Credits:|
GO|Going Out|>_Deutsche_ Bank|DB
FD|Food|Sun Work|SW
EL|Electronics|Friend|FR
_SU_|Subway|Correction|CO
TR|Travel Exp|Gift|GI
TX|>Entertainment|_Refing_|RE
SM|>Spending Money|Yale|YA
MI|Misc||
FE|Fencing||
RE|Rent||
MD|Mead||
CO|Correction||
_DT_|Debt||
CL|Clothing||
DR|_drogas_||`.split('\n').map(r => r.split('|'));

const cols = 'ABCDEFGHIJKLMNOPQRSTU'.split('');
const heads = ['<div class="ch"></div>', ...cols.map(c => `<div class="ch${c === 'N' ? ' sel' : ''}">${c}</div>`)];
const sheet = document.getElementById('sheet');
sheet.style.gridTemplateRows = '17px';
sheet.innerHTML = heads.join('') + rows.map((row, r) => {
  const cells = cols.map((_, c) => {
    let t = (c < 10 ? row[c] : c > 10 && legend[r] ? legend[r][c - 11] : '') || '';
    const num = r > 0 && c < 8 && t !== 'N/A';
    const cut = t[0] === '>';
    t = t.replace('>', '').replace(/_([^_]+)_/g, '<u>$1</u>');
    if (cut) t = `<span class="cut${c === 9 ? ' wide' : ''}">${t}</span>`;
    return `<div class="c${num ? ' n' : ''}">${t}</div>`;
  });
  return `<div class="rh">${r + 1}</div>` + cells.join('');
}).join('');

// chart: traces are stored at three units per pixel
const traces = [
  ['Checking', '#004586', 45, '147,812 150,785 675,952 679,958 688,965 688,800 690,775 700,802 703,760 706,780 720,782 722,790 726,808 740,818 745,825 751,832 754,585 764,590 764,857 775,875 790,880 795,897 805,915 815,918 816,870 826,872 830,625 833,630 847,640 850,655 858,665 865,657 880,660 888,672 891,855 895,592 900,592 905,810 911,842 930,860 960,870 965,880 972,890 976,667 985,669 1000,674 1035,735 1045,742 1048,765 1050,750 1085,803 1137,806 1137,770 1146,765 1148,775 1179,775 1179,765 1182,788 1195,790 1210,805 1238,812 1245,822 1277,848 1278,840 1279,865 1295,872 1322,874 1326,860 1331,670 1340,675 1418,720 1421,730 1470,768 1504,783 1508,776 1525,785 1540,790 1548,802 1552,798 1575,810 1590,790 1605,788 1625,795 1636,822 1650,835 1652,835 1656,792'],
  ['Savings', '#ff420e', 39, '145,395 155,395 675,540 688,540 689,518 700,518 702,514 750,514 752,486 825,486 829,457 890,457 893,429 970,429 975,400 1326,400 1331,380 1418,400 1650,400 1656,396'],
  ['Total', '#ffd320', 22, '147,432 150,402 675,738 688,748 689,535 697,563 700,545 703,518 706,540 720,545 726,570 740,580 750,590 755,318 764,323 767,590 775,608 788,612 795,630 810,652 815,652 817,602 825,602 829,325 833,333 847,345 850,360 858,368 865,360 880,364 890,375 891,555 895,218 901,230 905,470 911,515 930,535 960,543 965,555 972,565 976,312 1000,320 1035,385 1043,388 1048,410 1052,400 1085,450 1137,454 1137,415'],
  ['Owed to me', '#579d1c', 57, '145,754 675,712 764,712 764,665 816,665 816,712 848,712 848,705 890,705 893,712 1137,712 1137,754 1470,754 1504,743 1510,747 1540,747 1545,754'],
  ['Owed By Me', '#7e0021', 60, '145,754 675,575 891,575 891,754 1656,754'],
  ['Net worth', '#83caff', 45, '147,437 150,402 688,887 690,672 698,698 703,655 708,680 722,685 727,705 740,712 750,732 755,455 764,458 766,680 775,700 788,705 795,720 808,740 826,741 829,463 833,468 847,480 850,490 860,497 873,488 880,491 888,503 891,505 895,218 901,225 904,400 911,470 930,490 962,500 970,520 976,270 1000,276 1040,345 1048,348 1050,370 1052,358 1085,408 1137,411 1137,418 1142,420 1146,410 1148,423 1179,423 1180,412 1183,435 1195,438 1210,452 1238,458 1245,468 1277,495 1279,488 1279,510 1295,517 1322,519 1327,500 1331,293 1340,298 1418,343 1422,353 1475,397 1504,408 1510,402 1540,415 1548,428 1553,423 1575,436 1593,408 1620,412 1636,440 1645,452 1652,456 1656,405']
];
const tail = traces[5][3].slice(traces[5][3].indexOf('1137,411'));
const label = (x, y, len, t) => `<text x="${x}" y="${y}" textLength="${len}">${t}</text>`;
let g = '';
[5000, 4000, 3000, 2000, 1000, 0, -1000].forEach((v, i) => {
  const y = 406.5 + 47 * i, w = v === 0 ? 6 : v < 0 ? 28 : 24;
  g += `<path d="M664 ${y}H1172" stroke="#b3b3b3"/>` + label(660 - w, y + 3, w, v);
});
g += '<path d="M668.500 406V720" stroke="#b3b3b3" stroke-width="1.500"/><path d="M1172.500 406V720" stroke="#b3b3b3"/>';
g += '<g transform="translate(620 390) scale(.33333)" fill="none" stroke-linejoin="round">' + traces.map((t, i) =>
  (i === 5 ? `<polyline points="${tail}" stroke="#b9c48c" stroke-width="8"/>` : '') +
  `<polyline points="${t[3]}" stroke="${t[1]}" stroke-width="6.500"/>`).join('') + '</g>';
['02', '04', '06', '08', '10', '12'].forEach((m, i) => {
  const x = [668, 762.5, 858.5, 954.5, 1050.500, 1146.500][i];
  g += `<path d="M${x} 641v4" stroke="#b3b3b3"/>` + label(x - 21, 657, 43, m + '/20/16');
});
traces.forEach((t, i) => {
  const y = 536 + 14 * i;
  g += `<path d="M1189.500 ${y}h23.500" stroke="${t[1]}" stroke-width="2.200"/>` + label(1216, y + 3, t[2] + 1, t[0]);
});
document.getElementById('chart').innerHTML = `<svg width="669" height="325" viewBox="618 393 669 325">${g}</svg>`;
```
